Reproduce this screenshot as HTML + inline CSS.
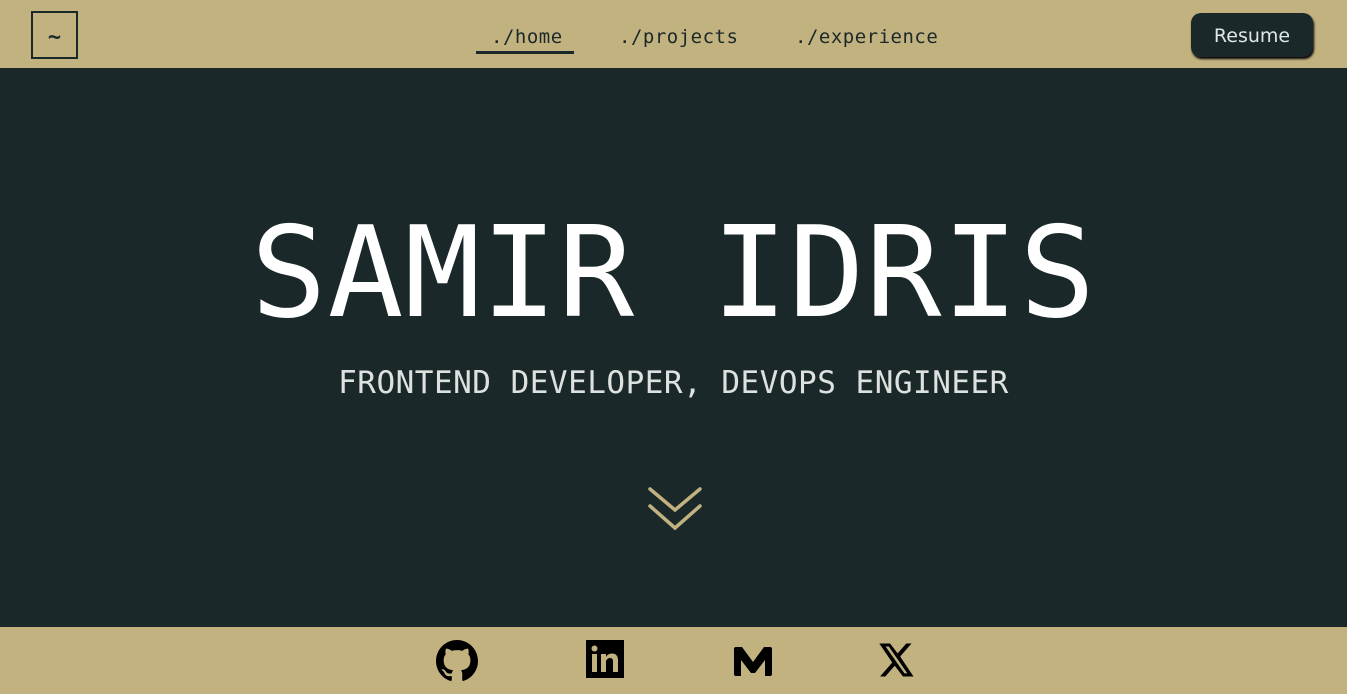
<!DOCTYPE html>
<html><head><style>
*{margin:0;padding:0;box-sizing:border-box}
body{width:1347px;height:694px;overflow:hidden;background:#1b2829;font-family:"DejaVu Sans Mono",monospace;position:relative}
header{position:absolute;left:0;top:0;width:1347px;height:68px;background:#c2b280}
.logo{position:absolute;left:31px;top:11px;width:47px;height:48px;border:2px solid #1b2829;color:#1b2829;font-size:22px;font-weight:bold;text-align:center;line-height:50px}
.nav{position:absolute;top:26px;font-size:19px;color:#1b2829;letter-spacing:0.5px}
.ul{position:absolute;left:476px;top:51px;width:98px;height:3px;background:#1b2829}
.btn{position:absolute;left:1191px;top:13px;width:122px;height:44px;background:#1b2829;border-radius:10px;color:#dfe6e6;font-family:"DejaVu Sans",sans-serif;font-size:19px;text-align:center;line-height:46px;box-shadow:1px 2px 2px #000}
h1{position:absolute;left:0;width:1347px;top:199px;text-align:center;color:#fff;font-weight:normal;font-size:126px;letter-spacing:1px}
h2{position:absolute;left:0;width:1347px;top:365px;text-align:center;color:#dde2e0;font-weight:normal;font-size:31px;letter-spacing:0.5px}
footer{position:absolute;left:0;top:627px;width:1347px;height:67px;background:#c2b280}
svg.i{position:absolute}
</style></head><body>
<header>
<div class="logo">~</div>
<div class="nav" style="left:491px">./home</div>
<div class="nav" style="left:619px">./projects</div>
<div class="nav" style="left:795px">./experience</div>
<div class="ul"></div>
<div class="btn">Resume</div>
</header>
<h1>SAMIR IDRIS</h1>
<h2>FRONTEND DEVELOPER, DEVOPS ENGINEER</h2>
<svg class="i" style="left:647px;top:485px" width="56" height="48" viewBox="0 0 56 48"><g fill="none" stroke="#c2b280" stroke-width="3.5" stroke-linecap="round"><path d="M3 4 L28 25 L53 4"/><path d="M3 21 L28 43 L53 21"/></g></svg>
<footer>
<svg class="i" style="left:436px;top:13px" width="42" height="42" viewBox="0 0 16 16"><path fill="#000" d="M8 0C3.58 0 0 3.58 0 8c0 3.540 2.29 6.53 5.47 7.59.4.07.55-.17.55-.38 0-.19-.01-.82-.01-1.49-2.01.37-2.530-.49-2.690-.94-.09-.23-.48-.94-.82-1.130-.28-.15-.68-.52-.01-.53.63-.01 1.08.58 1.23.82.72 1.21 1.87.87 2.33.66.07-.52.28-.87.51-1.07-1.78-.2-3.64-.89-3.64-3.95 0-.87.31-1.59.82-2.15-.08-.2-.36-1.02.08-2.12 0 0 .67-.21 2.2.82.64-.18 1.32-.27 2-.27.68 0 1.36.09 2 .27 1.53-1.04 2.2-.82 2.2-.82.44 1.1.16 1.92.08 2.12.51.56.82 1.27.82 2.15 0 3.07-1.87 3.75-3.65 3.95.29.25.54.73.54 1.48 0 1.070-.01 1.93-.01 2.2 0 .21.15.46.55.38A8.013 8.013 0 0016 8c0-4.42-3.58-8-8-8z"/></svg>
<svg class="i" style="left:586px;top:13px" width="38" height="38" viewBox="0 0 38 38"><rect width="38" height="38" fill="#000"/><rect x="6" y="14" width="5" height="18" fill="#c2b280"/><circle cx="8.5" cy="8.5" r="3" fill="#c2b280"/><path d="M15 14h5v3c1-2 3-3.5 6-3.5 4 0 6 2.5 6 7V32h-5V21.5c0-2.5-1-3.5-3-3.5s-4 1.500-4 4V32h-5z" fill="#c2b280"/></svg>
<svg class="i" style="left:732px;top:18px" width="42" height="32" viewBox="0 0 42 32"><path d="M2 4 Q2 2 4 2 H10 L21 17 L32 2 H38 Q40 2 40 4 V29 Q40 31 38 31 H33 V15 L23 28 H19 L9 15 V31 H4 Q2 31 2 29Z" fill="#000"/></svg>
<svg class="i" style="left:879px;top:16px" width="36" height="34" viewBox="0 0 24 22"><path fill="#000" d="M18.2 0h3.5l-7.6 8.7L23 22h-7l-5.5-7.2L4.2 22H.7l8.1-9.3L.2 0h7.2l5 6.6zm-1.2 19.9h1.9L6.5 2H4.4z"/></svg>
</footer>
</body></html>
